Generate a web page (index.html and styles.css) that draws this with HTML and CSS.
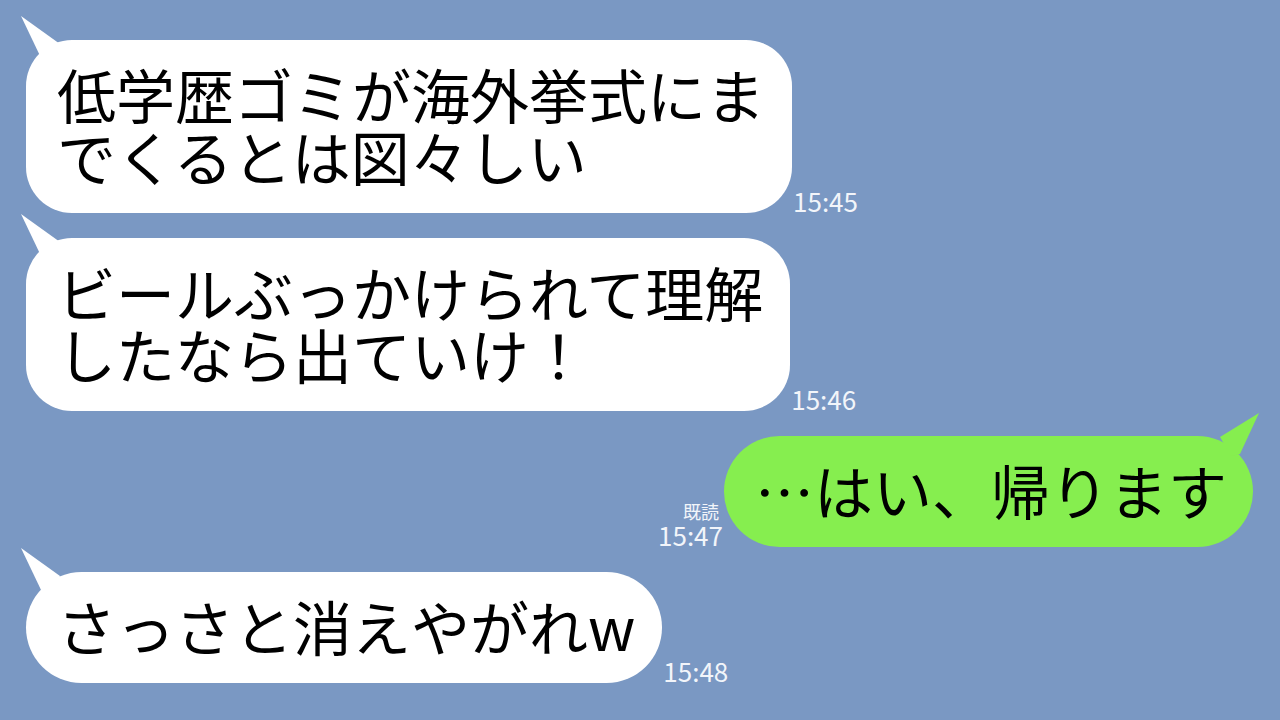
FILE: index.html
```html
<!DOCTYPE html>
<html lang="ja">
<head>
<meta charset="utf-8">
<title>chat</title>
<link rel="stylesheet" href="styles.css">
</head>
<body>
<main class="chat">
  <div class="row left">
    <div class="bubble white two">
      <svg class="tail tail-left" viewBox="0 0 50 50" width="50" height="50"><polygon points="1,2 40,30 30,50 22,46" /></svg>
      <p class="msg">低学歴ゴミが海外挙式にま<br>でくるとは図々しい</p>
    </div>
    <div class="meta"><span class="time">15:45</span></div>
  </div>
  <div class="row left">
    <div class="bubble white two">
      <svg class="tail tail-left" viewBox="0 0 50 50" width="50" height="50"><polygon points="1,2 40,30 30,50 22,46" /></svg>
      <p class="msg">ビールぶっかけられて理解<br>したなら出ていけ！</p>
    </div>
    <div class="meta"><span class="time">15:46</span></div>
  </div>
  <div class="row right">
    <div class="meta meta-right"><span class="read">既読</span><span class="time">15:47</span></div>
    <div class="bubble green one">
      <svg class="tail tail-right" viewBox="0 0 50 50" width="50" height="50"><polygon points="48,2 9,26 20,45 29,43" /></svg>
      <p class="msg">…はい、帰ります</p>
    </div>
  </div>
  <div class="row left">
    <div class="bubble white one">
      <svg class="tail tail-left" viewBox="0 0 50 50" width="50" height="50"><polygon points="1,2 40,30 30,50 22,46" /></svg>
      <p class="msg">さっさと消えやがれw</p>
    </div>
    <div class="meta"><span class="time">15:48</span></div>
  </div>
</main>
</body>
</html>
```
FILE: styles.css
```css
html, body {
  margin: 0;
  padding: 0;
}
body {
  width: 1280px;
  height: 720px;
  overflow: hidden;
  background: #7a98c3;
  font-family: "Noto Sans CJK JP", "Noto Sans", sans-serif;
}
.chat {
  display: flex;
  flex-direction: column;
  gap: 25px;
  padding: 40px 27px 0 26px;
}
.row {
  display: flex;
  align-items: flex-end;
  gap: 1px;
}
.row.right {
  justify-content: flex-end;
}
.bubble {
  position: relative;
  padding: 23px 27px 26px 31px;
}
.bubble.two {
  border-radius: 46px;
}
.bubble.one {
  border-radius: 56px;
}
.bubble.white {
  background: #ffffff;
}
.bubble.green {
  background: #86ee4f;
  padding: 23px 26px 26px 31px;
}
.white .tail polygon {
  fill: #ffffff;
}
.green .tail polygon {
  fill: #86ee4f;
}
.tail {
  position: absolute;
  display: block;
}
.tail-left {
  left: -6px;
  top: -26px;
}
.tail-right {
  right: -8px;
  top: -25px;
}
.msg {
  position: relative;
  margin: 0;
  font-size: 59px;
  line-height: 62px;
  color: #000000;
  white-space: nowrap;
}
.meta {
  display: flex;
  flex-direction: column;
  color: #f2f5fa;
  margin-bottom: -1px;
}
.meta-right {
  align-items: flex-end;
}
.read {
  font-size: 18px;
  line-height: 22px;
  margin-right: 4px;
}
.time {
  font-size: 26px;
  line-height: 26px;
}
```
